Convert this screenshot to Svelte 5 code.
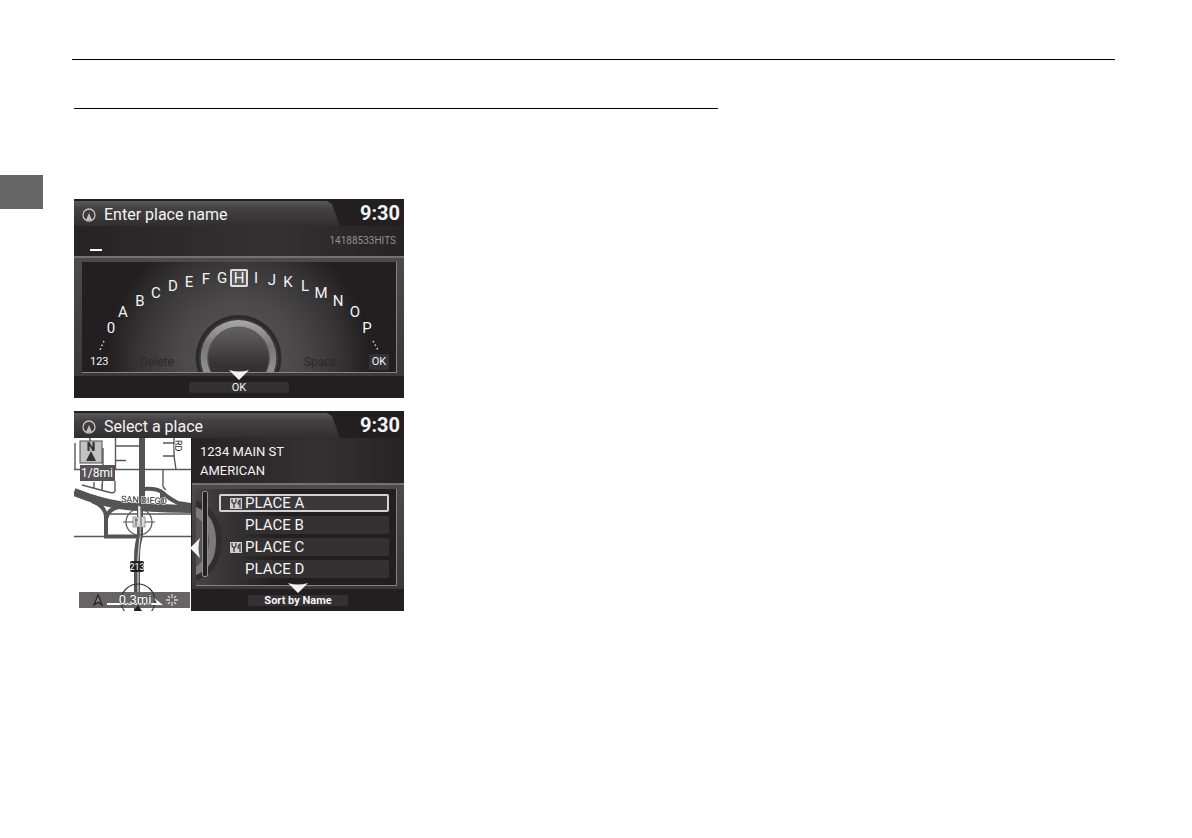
<script lang="ts">
  interface Key {
    label: string;
    x: number;
    y: number;
  }

  // key centres on the dial, measured from the panel's top left corner
  const keys: Key[] = [
    { label: '0', x: 29, y: 66 },
    { label: 'A', x: 41, y: 50 },
    { label: 'B', x: 58, y: 39 },
    { label: 'C', x: 74, y: 31 },
    { label: 'D', x: 91, y: 24 },
    { label: 'E', x: 107, y: 20 },
    { label: 'F', x: 124, y: 17 },
    { label: 'G', x: 140, y: 16 },
    { label: 'H', x: 157, y: 16 },
    { label: 'I', x: 174, y: 16 },
    { label: 'J', x: 190, y: 18 },
    { label: 'K', x: 206, y: 20 },
    { label: 'L', x: 223, y: 24 },
    { label: 'M', x: 239, y: 31 },
    { label: 'N', x: 256, y: 39 },
    { label: 'O', x: 273, y: 50 },
    { label: 'P', x: 285, y: 66 }
  ];

  const places = [
    { name: 'PLACE A', food: true },
    { name: 'PLACE B', food: false },
    { name: 'PLACE C', food: true },
    { name: 'PLACE D', food: false }
  ];

  let active = $state('H');
  let selected = $state('PLACE A');
  let query = $state('');
</script>

{#snippet titleBar(title: string)}
  <header class="title-bar">
    <div class="title-tab">
      <svg class="nav-icon" viewBox="0 0 14 14" aria-hidden="true">
        <circle cx="7" cy="7" r="6" fill="none" stroke="#c4c4c4" stroke-width="1.3" />
        <path d="M7 5 L10 12 H4 Z" fill="#bdbdbd" />
      </svg>
      <h2>{title}</h2>
    </div>
    <time class="clock">9:30</time>
  </header>
{/snippet}

{#snippet downArrow()}
  <svg class="down-arrow" viewBox="0 0 22 10" aria-hidden="true">
    <path d="M1 0 Q11 3 21 0 L11 10 Z" fill="#f2f2f2" />
  </svg>
{/snippet}

<main class="page">
  <div class="top-rule"></div>
  <div class="section-rule"></div>
  <div class="content">
    <aside class="chapter-tab"></aside>
    <div class="screens">
      <section class="screen">
        {@render titleBar('Enter place name')}
        <div class="entry">
          <input class="entry-field" type="text" bind:value={query} aria-label="Place name" />
          <span class="hits">14188533HITS</span>
        </div>
        <div class="frame">
          <div class="dial">
            <svg class="dial-art" viewBox="0 0 315 110" preserveAspectRatio="none" aria-hidden="true">
              <defs>
                <radialGradient id="glow" cx="157" cy="96" r="132" gradientUnits="userSpaceOnUse">
                  <stop offset="0" stop-color="#5a5859" />
                  <stop offset="0.45" stop-color="#4a4849" />
                  <stop offset="0.75" stop-color="#373536" />
                  <stop offset="1" stop-color="#231f20" />
                </radialGradient>
                <linearGradient id="ring" x1="0" y1="0" x2="0" y2="1">
                  <stop offset="0" stop-color="#a8a8a8" />
                  <stop offset="0.35" stop-color="#777" />
                  <stop offset="0.65" stop-color="#8e8e8e" />
                </linearGradient>
                <linearGradient id="knob" x1="0" y1="0" x2="0" y2="1">
                  <stop offset="0" stop-color="#636162" />
                  <stop offset="0.6" stop-color="#353334" />
                  <stop offset="1" stop-color="#2b292a" />
                </linearGradient>
              </defs>
              <rect width="315" height="110" fill="#231f20" />
              <circle cx="157" cy="96" r="132" fill="url(#glow)" />
              <circle cx="157" cy="96" r="43" fill="#2b292a" />
              <circle cx="157" cy="96" r="40" fill="#393738" />
              <circle cx="157" cy="96" r="38" fill="url(#ring)" />
              <circle cx="157" cy="96" r="31" fill="url(#knob)" stroke="#5a5859" />
              <path d="M22 79 L18 88 M292 79 L297 88" stroke="#ddd" stroke-width="1.5" stroke-dasharray="1.5 2.5" />
            </svg>
            {#each keys as key (key.label)}
              <button
                type="button"
                class="key"
                class:active={active === key.label}
                style="left: {key.x}px; top: {key.y}px"
                onclick={() => (active = key.label)}
              >
                {key.label}
              </button>
            {/each}
            <div class="dial-actions">
              <button type="button">123</button>
              <button type="button" class="faint" disabled>Delete</button>
              <button type="button" class="faint" disabled>Space</button>
              <button type="button" class="ok">OK</button>
            </div>
          </div>
          {@render downArrow()}
        </div>
        <footer class="footer">
          <button type="button" class="soft-key">OK</button>
        </footer>
      </section>

      <section class="screen">
        {@render titleBar('Select a place')}
        <div class="split">
          <svg class="map" viewBox="0 0 117 173" preserveAspectRatio="none" role="img" aria-label="Map near San Diego">
            <rect width="117" height="173" fill="#fff" />
            <g fill="none" stroke="#5a5859" stroke-width="1.4">
              <path d="M0 31.5 H117 M41.5 0 V31.5 M41.5 8 H65 M41.5 22.5 H52 M89 5 H101 M89 18 H101 M100 0 V18 L102 31.5" />
              <path d="M29 10 V34 L28 53 M1 5 V31 M16 0 V10 M41 43 V53 Q40 56 34 54 L8 47 M28 46 V53 M20 44 V50" />
              <path d="M89 31.5 V46 Q88 49 92 52 M0 98.5 H117 M32 76 H117" />
            </g>
            <g fill="none" stroke="#555354">
              <path d="M68 0 V66" stroke-width="6" />
              <path d="M0 54 Q25 64 45 67 T117 71" stroke-width="8" />
              <path d="M70 51 Q84 50 89 55 T104 65 L117 67 M88 55 V66" stroke-width="4" />
              <path d="M18 63 Q32 68 32 80 V98.5 H64 M45 69 Q34 71 32.5 80" stroke-width="4" />
              <path d="M66 70 V98 Q63 108 63 120 V173" stroke-width="6" />
            </g>
            <path d="M66 69 V98 L64 120 V166" fill="none" stroke="#d0d0d0" stroke-width="1.3" />
            <g font-family="Roboto, sans-serif">
              <g font-size="9" fill="#222" stroke="#fff" stroke-width="1" paint-order="stroke">
                <text x="47" y="64" transform="rotate(3 47 64)">SAN DIEGO</text>
                <text x="101" y="2" transform="rotate(90 101 2)">RD</text>
              </g>

              <!-- compass and scale -->
              <rect x="6" y="3" width="22" height="22" fill="#c2c2c2" stroke="#4e4c4d" />
              <path d="M17 13 L22 23 H12 Z" fill="#333" />
              <text x="17" y="13" font-size="12" font-weight="900" fill="#333" text-anchor="middle">N</text>
              <rect x="6" y="27" width="35" height="16" fill="#555354" />
              <text x="23" y="39" font-size="12" fill="#fff" text-anchor="middle">1/8mi</text>

              <!-- destination marker -->
              <rect x="59" y="79" width="12" height="10" fill="#d8d8d8" stroke="#888" stroke-width="0.8" />
              <path d="M62 80 V88 M67 80 V88 M61 82 H64" stroke="#555" fill="none" />
              <circle cx="65" cy="84" r="13" fill="none" stroke="#555" stroke-width="1.2" />
              <path d="M49 84 H59 M71 84 H81 M65 89 V100" stroke="#555" stroke-width="1.2" />
              <path d="M65 68 V79" stroke="#fff" stroke-width="1.5" />

              <rect x="56" y="123" width="14" height="11" rx="2" fill="#231f20" />
              <text x="63" y="132" font-size="9" fill="#fff" text-anchor="middle">213</text>

              <!-- distance strip -->
              <rect x="5" y="154" width="111" height="16" fill="#666465" />
              <circle cx="64" cy="163" r="17" fill="none" stroke="#333132" stroke-width="1.2" />
              <path d="M64 167 L68 173 H60 Z" fill="#231f20" />
              <path d="M24 157 L28 167 L24 164 L20 167 Z" fill="#8a8a8a" stroke="#231f20" stroke-width="1.2" />
              <path d="M33 165 H83 L80 160 L89 167 H33 Z" fill="#fff" />
              <text x="61" y="166" font-size="13" fill="#fff" stroke="#555354" stroke-width="1.5" paint-order="stroke" text-anchor="middle">0.3mi</text>
              <path
                d="M98 156 V160 M98 164 V168 M92 162 H96 M100 162 H104 M94 158 L96 160 M102 158 L100 160 M94 166 L96 164 M102 166 L100 164"
                stroke="#cfcfcf"
                stroke-width="1.3"
              />
            </g>
          </svg>
          <div class="results">
            <address>
              <span>1234 MAIN ST</span>
              <span>AMERICAN</span>
            </address>
            <div class="frame list-frame">
              <div class="list-panel">
                <svg class="side-dial" viewBox="0 0 26 92" aria-hidden="true">
                  <path d="M0 7 Q26 18 26 48 T0 88 Z" fill="#302e2f" />
                  <path d="M0 14 Q20 22 20 48 T0 82 Z" fill="#7c7a7b" />
                  <path d="M0 24 Q13 32 13 48 T0 74 Z" fill="#555354" />
                </svg>
                <div class="scrollbar"></div>
                <ul>
                  {#each places as place (place.name)}
                    <li>
                      <button
                        type="button"
                        class="place"
                        class:selected={selected === place.name}
                        onclick={() => (selected = place.name)}
                      >
                        <span class="badge">
                          {#if place.food}
                            <svg viewBox="0 0 12 11" aria-hidden="true">
                              <rect width="12" height="11" fill="#cfcfcf" />
                              <path d="M2 1 V4 L4 6 V10 M6 1 V4 L4 6 M10 10 V2 Q8 3 8 6 H10" fill="none" stroke="#333" stroke-width="1.2" />
                            </svg>
                          {/if}
                        </span>
                        {place.name}
                      </button>
                    </li>
                  {/each}
                </ul>
              </div>
              {@render downArrow()}
              <svg class="left-arrow" viewBox="0 0 10 20" aria-hidden="true">
                <path d="M10 0 Q7 10 10 20 L0 10 Z" fill="#f2f2f2" />
              </svg>
            </div>
            <footer class="footer">
              <button type="button" class="soft-key strong">Sort by Name</button>
            </footer>
          </div>
        </div>
      </section>
    </div>
  </div>
</main>

<style>
  :global(body) {
    margin: 0;
    background: #fff;
  }

  .page {
    box-sizing: border-box;
    min-height: 100vh;
    padding-top: 59px;
    font-family: Roboto, 'Liberation Sans', sans-serif;
  }

  .top-rule {
    height: 1px;
    margin: 0 77px 0 72px;
    background: #000;
  }

  .section-rule {
    height: 1px;
    width: 54%;
    margin: 48px 0 66px 74px;
    background: #000;
  }

  .content {
    display: grid;
    grid-template-columns: 43px 1fr;
    gap: 31px;
  }

  .chapter-tab {
    height: 34px;
    background: #666;
  }

  .screens {
    display: flex;
    flex-direction: column;
    gap: 13px;
    padding-top: 24px;
  }

  .screen {
    width: 100%;
    max-width: 330px;
    overflow: hidden;
    background: #231f20;
    color: #f4f4f4;
  }

  button {
    padding: 0;
    border: none;
    background: none;
    color: inherit;
    font: inherit;
    cursor: pointer;
  }

  .title-bar {
    display: flex;
    height: 27px;
    padding-top: 1px;
    box-sizing: border-box;
  }

  .title-tab {
    display: flex;
    flex: 1;
    align-items: center;
    gap: 8px;
    padding: 3px 0 0 8px;
    background: linear-gradient(#5e5c5d, #444243 30%, #302e2f);
    clip-path: polygon(0 1px, 95% 1px, 97% 4px, 100% 100%, 0 100%);
  }

  .nav-icon {
    width: 14px;
    height: 14px;
  }

  h2 {
    margin: 0;
    font-size: 16px;
    line-height: 20px;
    font-weight: 400;
  }

  .clock {
    width: 64px;
    padding-right: 4px;
    box-sizing: border-box;
    font-size: 20px;
    line-height: 26px;
    font-weight: 700;
    text-align: right;
  }

  .entry {
    display: flex;
    justify-content: space-between;
    height: 30px;
    padding: 0 8px 0 16px;
    box-sizing: border-box;
    background: linear-gradient(90deg, #272324, #343132 60%, #272324);
  }

  .entry-field {
    width: 12px;
    height: 25px;
    padding: 0;
    box-sizing: border-box;
    border: none;
    border-bottom: 2px solid #fff;
    background: none;
    color: #fff;
    font: inherit;
    outline: none;
  }

  .hits {
    font-size: 10px;
    line-height: 30px;
    color: #918f90;
  }

  .frame {
    position: relative;
    padding: 4px 7px 3px 8px;
    border-top: 2px solid #737172;
    background: linear-gradient(#4c4a4b, #3a3839);
  }

  .dial {
    position: relative;
    height: 111px;
    border-right: 1px solid #858384;
    border-bottom: 1px solid #858384;
    box-sizing: border-box;
  }

  .dial-art {
    display: block;
    width: 100%;
    height: 100%;
  }

  .key {
    position: absolute;
    width: 18px;
    height: 18px;
    border-radius: 2px;
    font-size: 15px;
    line-height: 18px;
    text-align: center;
    transform: translate(-50%, -50%);
  }

  .key.active {
    box-shadow: inset 0 0 0 2px #dedede;
    background: #5a5859;
  }

  .dial-actions {
    position: absolute;
    inset: auto 7px 2px 8px;
    display: grid;
    grid-template-columns: 50px 1fr 1fr 20px;
    align-items: center;
    font-size: 11px;
    line-height: 16px;
  }

  .dial-actions button:first-child {
    text-align: left;
  }

  .dial-actions .faint {
    font-size: 12px;
    color: #2b292a;
    text-align: left;
  }

  .dial-actions .faint + .faint {
    padding-right: 32px;
    text-align: right;
  }

  .dial-actions .ok {
    background: #343132;
  }

  .down-arrow {
    position: absolute;
    bottom: -4px;
    left: 50%;
    width: 22px;
    height: 10px;
    transform: translateX(-50%);
  }

  .footer {
    display: flex;
    justify-content: center;
    padding: 6px 0 5px;
    background: #231f20;
  }

  .soft-key {
    width: 100px;
    height: 11px;
    border-radius: 2px;
    background: #343132;
    font-size: 11px;
    line-height: 11px;
  }

  .soft-key.strong {
    font-weight: 700;
  }

  .split {
    display: flex;
    height: 173px;
  }

  .map {
    width: 117px;
    height: 100%;
  }

  .results {
    display: flex;
    flex: 1;
    flex-direction: column;
    border-left: 1px solid #231f20;
  }

  address {
    display: flex;
    flex-direction: column;
    padding: 4px 8px 3px;
    background: linear-gradient(90deg, #272324, #343132 60%, #272324);
    font-size: 13px;
    line-height: 19px;
    font-style: normal;
  }

  .list-frame {
    flex: 1;
    padding-left: 4px;
  }

  .list-panel {
    position: relative;
    display: flex;
    height: 100%;
    padding: 2px 7px 2px 6px;
    box-sizing: border-box;
    border-right: 1px solid #858384;
    border-bottom: 1px solid #858384;
    background: linear-gradient(90deg, #444243, #231f20 40%, #231f20);
  }

  .side-dial {
    position: absolute;
    inset: 4px auto auto 0;
    width: 26px;
    height: 92px;
  }

  .scrollbar {
    position: relative;
    width: 6px;
    height: 86px;
    box-sizing: border-box;
    border: 1px solid #918f90;
    border-radius: 2px;
    background: #231f20;
  }

  ul {
    display: flex;
    flex: 1;
    flex-direction: column;
    gap: 4px;
    margin: 0 0 0 11px;
    padding: 3px 0 0;
    list-style: none;
  }

  li {
    display: flex;
  }

  .place {
    display: flex;
    flex: 1;
    align-items: center;
    gap: 3px;
    height: 18px;
    padding-left: 11px;
    border-radius: 2px;
    background: linear-gradient(90deg, transparent, #343132 20%);
    font-size: 15px;
    line-height: 18px;
  }

  .place.selected {
    background: #3a3839;
    box-shadow: inset 0 0 0 2px #d2d2d2;
  }

  .badge {
    display: flex;
    width: 12px;
    height: 11px;
  }

  .left-arrow {
    position: absolute;
    top: 53px;
    left: -2px;
    width: 10px;
    height: 20px;
  }
</style>
